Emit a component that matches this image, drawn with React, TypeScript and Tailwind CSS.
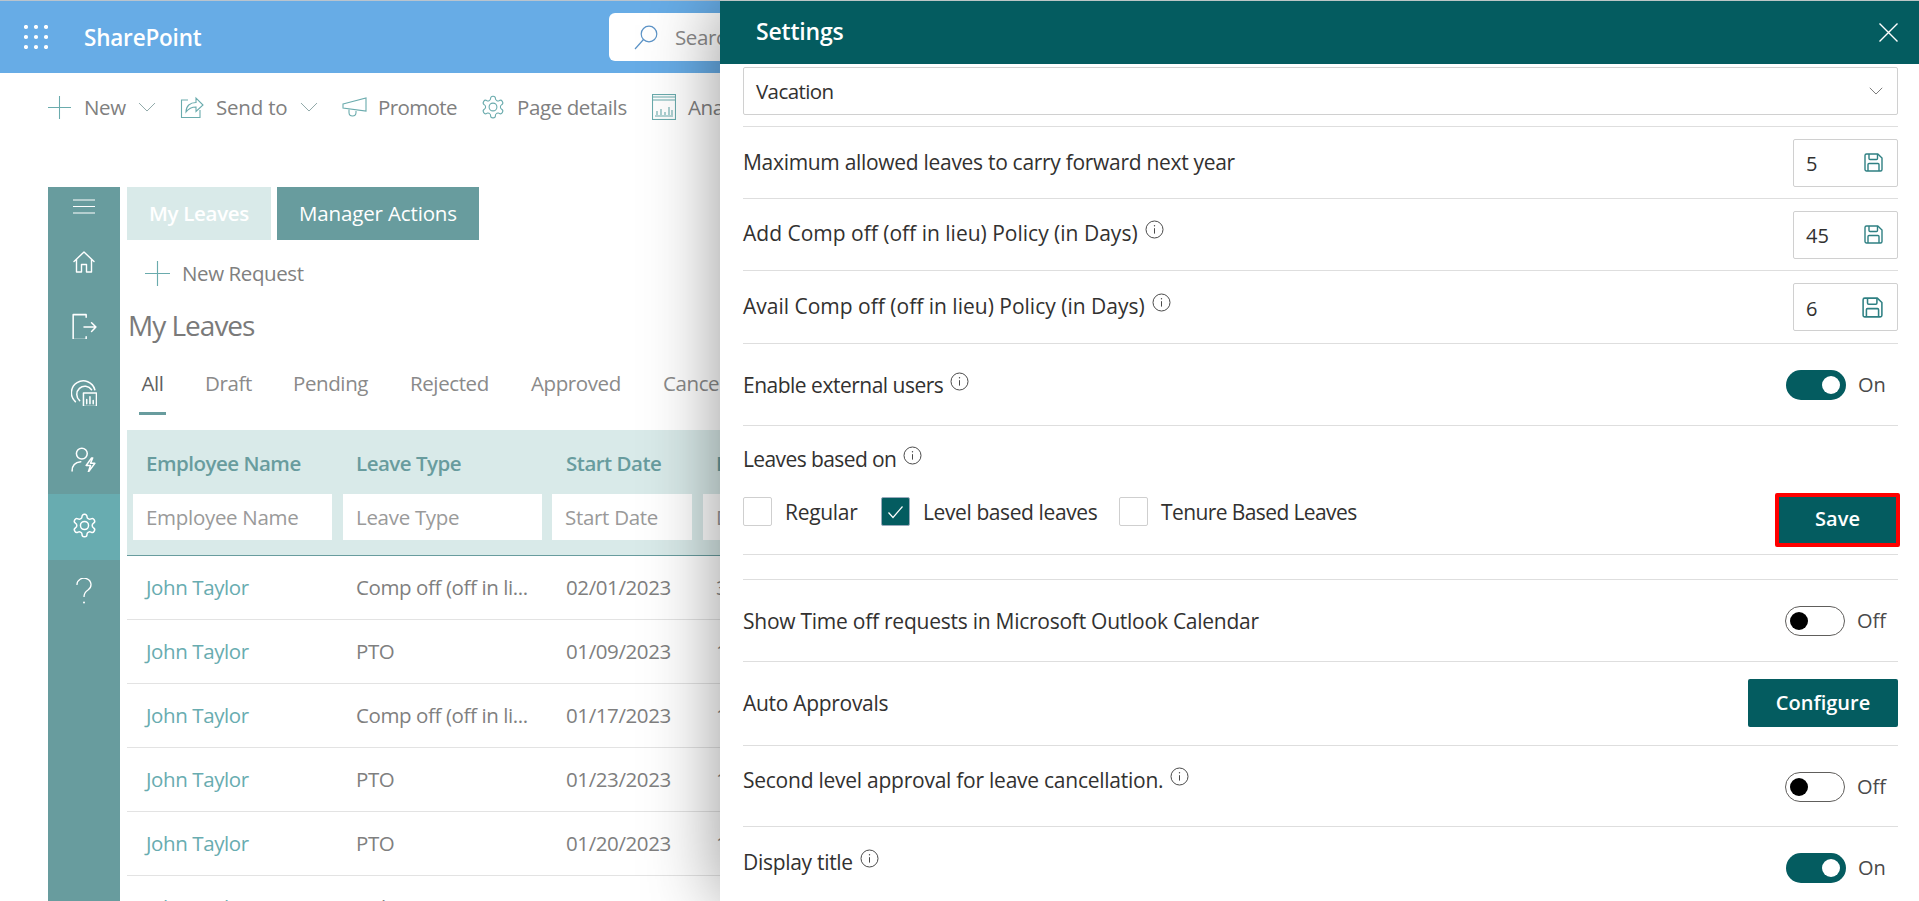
import React from "react";

const F = { fontFamily: '"Open Sans", "Noto Sans", sans-serif' };

function Info({ className = "" }: { className?: string }) {
  return (
    <svg width="19" height="19" viewBox="0 0 19 19" fill="none" stroke="#4a4a4a" strokeWidth="1" className={className}>
      <circle cx="9.5" cy="9.5" r="8.5" />
      <path d="M9.5 8.2v5.4" />
      <circle cx="9.5" cy="5.8" r="0.7" fill="#4a4a4a" stroke="none" />
    </svg>
  );
}

function Floppy({ big = false }: { big?: boolean }) {
  const s = big ? 21 : 19;
  return (
    <svg width={s} height={s} viewBox="0 0 19 19" fill="none" stroke="#2f8083" strokeWidth="1.4">
      <path d="M1 2.5A1.5 1.5 0 0 1 2.5 1h11.3L18 5v11.5a1.5 1.5 0 0 1-1.5 1.5h-14A1.5 1.5 0 0 1 1 16.5z" />
      <path d="M5 1v4.5a1 1 0 0 0 1 1h6.5a1 1 0 0 0 1-1V1" />
      <path d="M4 18v-6.5a1 1 0 0 1 1-1h9a1 1 0 0 1 1 1V18" />
    </svg>
  );
}

function Toggle({ on }: { on: boolean }) {
  return (
    <div className="flex items-center">
      {on ? (
        <div className="w-[60px] h-[30px] rounded-full bg-[#045c60] flex items-center justify-end pr-[6px]">
          <div className="w-[18px] h-[18px] rounded-full bg-white" />
        </div>
      ) : (
        <div className="w-[60px] h-[30px] rounded-full border border-[#605e5c] bg-white flex items-center pl-[4px]">
          <div className="w-[18px] h-[18px] rounded-full bg-black" />
        </div>
      )}
      <span className="ml-[12px] w-[40px] text-[20px] text-[#4a4a4a]">{on ? "On" : "Off"}</span>
    </div>
  );
}

function Row({ h, children, last = false }: { h: string; children: React.ReactNode; last?: boolean }) {
  return (
    <div className={`${h} flex items-center justify-between shrink-0 ${last ? "" : "border-b border-[#dedede]"}`}>{children}</div>
  );
}

function Label({ text, info = false, mb = "", track = "tracking-[-0.3px]" }: { text: string; info?: boolean; mb?: string; track?: string }) {
  return (
    <div className={`flex items-start ${mb}`}>
      <span className={`text-[21px] leading-[28px] ${track} text-[#323130] whitespace-nowrap`}>{text}</span>
      {info && <Info className="ml-[7px] mt-[1px]" />}
    </div>
  );
}

function NumBox({ v, big = false }: { v: string; big?: boolean }) {
  return (
    <div className="w-[105px] h-[48px] border border-[#d0d0d0] rounded-[2px] flex items-center justify-between pl-[12px] pr-[14px]">
      <span className="text-[20px] pt-[3px] text-[#323130]">{v}</span>
      <Floppy big={big} />
    </div>
  );
}

function Check({ on = false }: { on?: boolean }) {
  return on ? (
    <div className="w-[29px] h-[29px] rounded-[2px] bg-[#045c60] border border-[#9ab] flex items-center justify-center">
      <svg width="17" height="14" viewBox="0 0 17 14" fill="none" stroke="#fff" strokeWidth="1.2"><path d="M1.5 7.5l4.5 5L15.5 1.5" /></svg>
    </div>
  ) : (
    <div className="w-[29px] h-[29px] rounded-[2px] bg-white border border-[#cfcfcf]" />
  );
}

function SideItem({ active = false, h, children }: { active?: boolean; h: string; children: React.ReactNode }) {
  return <div className={`${h} flex items-center justify-center ${active ? "bg-[#68acb0]" : ""}`}>{children}</div>;
}

const Stroke = ({ s = 24, children }: { s?: number; children: React.ReactNode }) => (
  <svg width={s} height={s} viewBox="0 0 24 24" fill="none" stroke="#fff" strokeWidth="1.4" strokeLinejoin="round" strokeLinecap="round">{children}</svg>
);

const TealPlus = ({ s }: { s: number }) => (
  <svg width={s} height={s} viewBox="0 0 24 24" stroke="#6aabad" strokeWidth="1.1" fill="none"><path d="M12 0v24M0 12h24" /></svg>
);

const Chevron = ({ w = 18, c = "#8fa8a8" }: { w?: number; c?: string }) => (
  <svg width={w} height={w * 0.56} viewBox="0 0 18 10" fill="none" stroke={c} strokeWidth="1"><path d="M1 1l8 8 8-8" /></svg>
);

const Gear = ({ s, c, sw = 1.3 }: { s: number; c: string; sw?: number }) => (
  <svg width={s} height={s} viewBox="0 0 24 24" fill="none" stroke={c} strokeWidth={sw} strokeLinejoin="round">
    <path d="M12.22 2h-.44a2 2 0 0 0-2 2v.18a2 2 0 0 1-1 1.73l-.43.25a2 2 0 0 1-2 0l-.15-.08a2 2 0 0 0-2.73.73l-.22.38a2 2 0 0 0 .73 2.73l.15.1a2 2 0 0 1 1 1.72v.51a2 2 0 0 1-1 1.74l-.15.09a2 2 0 0 0-.73 2.73l.22.38a2 2 0 0 0 2.73.73l.15-.08a2 2 0 0 1 2 0l.43.25a2 2 0 0 1 1 1.73V20a2 2 0 0 0 2 2h.44a2 2 0 0 0 2-2v-.18a2 2 0 0 1 1-1.73l.43-.25a2 2 0 0 1 2 0l.15.08a2 2 0 0 0 2.73-.73l.22-.39a2 2 0 0 0-.73-2.73l-.15-.08a2 2 0 0 1-1-1.74v-.5a2 2 0 0 1 1-1.74l.15-.09a2 2 0 0 0 .73-2.73l-.22-.38a2 2 0 0 0-2.73-.73l-.15.08a2 2 0 0 1-2 0l-.43-.25a2 2 0 0 1-1-1.73V4a2 2 0 0 0-2-2z" />
    <circle cx="12" cy="12" r="3.6" />
  </svg>
);

const cols = ["w-[210px]", "w-[210px]", "w-[150px]", "w-[240px]"];
const inputs = ["w-[199px] ml-[6px]", "w-[199px] ml-[6px]", "w-[140px] ml-[5px]", "w-[199px] ml-[6px]"];
const heads = ["Employee Name", "Leave Type", "Start Date", "Days"];
const rows = [
  ["Comp off (off in li...", "02/01/2023", "3"],
  ["PTO", "01/09/2023", "1"],
  ["Comp off (off in li...", "01/17/2023", "1"],
  ["PTO", "01/23/2023", "1"],
  ["PTO", "01/20/2023", "1"],
  ["Sick", "01/10/2023", "1"],
];

export default function App() {
  return (
    <div className="relative w-[1919px] h-[901px] overflow-hidden bg-white" style={F}>
      {/* Page underneath */}
      <header className="h-[73px] bg-[#67ace6] border-t border-[#b9c4ce] flex items-center">
        <svg width="24" height="24" viewBox="0 0 24 24" fill="#fff" className="ml-[24px]">
          {[2, 12, 22].map((y) => [2, 12, 22].map((x) => <circle key={`${x}-${y}`} cx={x} cy={y} r="2.1" />))}
        </svg>
        <span className="ml-[36px] w-[118px] pt-[2px] text-[22.5px] font-semibold text-white tracking-[-0.2px]">SharePoint</span>
        <div className="ml-[407px] w-[300px] h-[48px] bg-white rounded-[6px] flex items-center pl-[25px]">
          <svg width="24" height="25" viewBox="0 0 24 25" fill="none" stroke="#5b93c7" strokeWidth="1.2"><circle cx="15" cy="9" r="7.8" /><path d="M9.5 14.5L1 24" /></svg>
          <span className="ml-[17px] text-[20.5px] tracking-[-0.4px] text-[#8a8a8a]">Search</span>
        </div>
      </header>

      <div className="h-[68px] pl-[48px] flex items-center text-[20.5px] tracking-[-0.4px] text-[#808080]">
        <TealPlus s={23} />
        <span className="ml-[13px] w-[42px]">New</span>
        <span className="ml-[12px]"><Chevron /></span>
        <svg width="24" height="24" viewBox="0 0 24 24" fill="none" stroke="#6aabad" strokeWidth="1.1" className="ml-[24px]">
          <path d="M8 5H1.5v17.5H20V15" /><path d="M6 17c0-6 4-9.500 10-9.500V3l7 7-7 6.500V12c-4 0-7 1-10 5z" />
        </svg>
        <span className="ml-[12px] w-[72px] whitespace-nowrap tracking-[-0.2px]">Send to</span>
        <span className="ml-[12px]"><Chevron /></span>
        <svg width="25" height="20" viewBox="0 0 25 20" fill="none" stroke="#6aabad" strokeWidth="1.1" className="ml-[24px]">
          <path d="M1 7l23-6v13L1 11z" /><path d="M7 12.500v3a3.500 3.500 0 0 0 7 0v-1.500" />
        </svg>
        <span className="ml-[11px] w-[78px] tracking-[-0.6px]">Promote</span>
        <span className="ml-[24px]"><Gear s={26} c="#6aabad" sw={1} /></span>
        <span className="ml-[11px] w-[111px] whitespace-nowrap">Page details</span>
        <svg width="24" height="26" viewBox="0 0 24 26" fill="none" stroke="#6aabad" strokeWidth="1.1" className="ml-[24px]">
          <rect x="0.500" y="0.500" width="23" height="25" /><path d="M0.500 6h23M0.500 3h23" />
          <path d="M5 21v-4M9 21v-6M13 21v-3M17 21v-8M20 21v-5M3 22h18" />
        </svg>
        <span className="ml-[12px]">Analytics</span>
      </div>

      <div className="mt-[46px] ml-[48px] flex h-[714px]">
        <aside className="w-[72px] bg-[#689c9e] flex flex-col shrink-0">
          <SideItem h="h-[42px]">
            <svg width="22" height="15" viewBox="0 0 22 15" stroke="#fff" strokeWidth="1.1" className="mb-[4px]"><path d="M0 1h22M0 7.500h22M0 14h22" /></svg>
          </SideItem>
          <SideItem h="h-[66px]">
            <Stroke s={24}><path d="M2 11.500L12 2l10 9.500M4.500 9.500V22h5v-7.500h5V22h5V9.500" /></Stroke>
          </SideItem>
          <SideItem h="h-[63px]">
            <div className="mb-[2px]"><Stroke s={26}><path d="M14 4V1.500H2v23h12V22M2 1.500l0 23M12 13h11M19 9l4 4-4 4" /></Stroke></div>
          </SideItem>
          <SideItem h="h-[69px]">
            <Stroke s={26}><path d="M4 20A11 11 0 1 1 22 9" /><path d="M8 19A7.500 7.500 0 1 1 19 9" /><rect x="11.500" y="12" width="12" height="12.500" fill="#689c9e" /><path d="M14.500 22v-4M17.500 22v-6.500M20.500 22v-3" /></Stroke>
          </SideItem>
          <SideItem h="h-[67px]">
            <div className="mb-[4px]"><Stroke s={26}><circle cx="10" cy="7" r="5" /><path d="M1 23c0-5 3-8 8-8.500" /><path d="M19 11l-5 7h4l-2 6 6-8h-4l2-5z" /></Stroke></div>
          </SideItem>
          <SideItem active h="h-[66px]">
            <div className="mb-[4px]"><Gear s={27} c="#fff" /></div>
          </SideItem>
          <SideItem h="h-[62px]">
            <svg width="16" height="26" viewBox="0 0 16 26" fill="none" stroke="#fff" strokeWidth="1.3"><path d="M1 7a7 6.500 0 1 1 11 5c-3 2-4 3.500-4 7" /><circle cx="8" cy="24.500" r="1" fill="#fff" stroke="none" /></svg>
          </SideItem>
        </aside>

        <main className="ml-[7px] w-[900px] flex flex-col">
          <div className="flex h-[53px] shrink-0 text-[20.5px] text-white">
            <div className="w-[144px] bg-[#d9eae9] flex items-center justify-center font-semibold tracking-[-0.3px]">My Leaves</div>
            <div className="ml-[6px] w-[202px] bg-[#689c9e] flex items-center justify-center tracking-[-0.15px]">Manager Actions</div>
          </div>
          <div className="h-[68px] pb-[2px] shrink-0 pl-[18px] flex items-center text-[20.5px] text-[#808080]">
            <TealPlus s={25} />
            <span className="ml-[12px] tracking-[-0.4px]">New Request</span>
          </div>
          <h1 className="h-[34px] shrink-0 pl-[1px] flex items-center text-[28px] font-medium text-[#7a7a7a] tracking-[-1px]">My Leaves</h1>
          <nav className="mt-[29px] h-[44px] shrink-0 flex text-[20.5px] text-[#8a8a8a] tracking-[-0.4px] leading-[24px] whitespace-nowrap">
            <div className="ml-[12px] w-[27px] h-full border-b-[3px] border-[#689c9e] text-center text-[#5f5f5f]">All</div>
            <div className="ml-[39px] w-[46px]">Draft</div>
            <div className="ml-[42px] w-[74px]">Pending</div>
            <div className="ml-[43px] w-[78px]">Rejected</div>
            <div className="ml-[43px] w-[90px]">Approved</div>
            <div className="ml-[42px]">Cancelled</div>
          </nav>

          <div className="mt-[15px] h-[126px] shrink-0 bg-[#d9eae9] border-b border-[#689c9e] flex">
            {heads.map((h, i) => (
              <div key={h} className={`${cols[i]} shrink-0`}>
                <div className="h-[64px] pl-[19px] pt-[2px] flex items-center text-[20.5px] font-semibold text-[#689c9e] tracking-[-0.5px]">{h}</div>
                <div className={`${inputs[i]} h-[46px] bg-white pl-[13px] flex items-center text-[20.5px] text-[#9a9a9a] tracking-[-0.3px]`}>{h}</div>
              </div>
            ))}
          </div>
          {rows.map((r, idx) => (
            <div key={idx} className="h-[64px] shrink-0 border-b border-[#e3e3e3] flex items-center text-[20.5px] text-[#7f7f7f] tracking-[-0.4px]">
              <div className={`${cols[0]} shrink-0 pl-[19px] text-[#68acb0]`}>John Taylor</div>
              <div className={`${cols[1]} shrink-0 pl-[19px] whitespace-nowrap`}>{r[0]}</div>
              <div className={`${cols[2]} shrink-0 pl-[19px]`}>{r[1]}</div>
              <div className={`${cols[3]} shrink-0 pl-[19px]`}>{r[2]}</div>
            </div>
          ))}
        </main>
      </div>

      {/* Settings panel overlay */}
      <section className="absolute left-[720px] top-0 right-0 bottom-0 bg-white shadow-[0_0_70px_rgba(0,0,0,0.42)] flex flex-col">
        <div className="h-[64px] shrink-0 bg-[#045c60] border-t border-[#bcc6c6] flex items-center justify-between pl-[36px] pr-[21px]">
          <span className="pb-[2px] text-[23px] font-semibold text-white tracking-[-0.2px]">Settings</span>
          <svg width="19" height="19" viewBox="0 0 19 19" stroke="#fff" strokeWidth="1.4"><path d="M0.500 0.500l18 18M18.500 0.500l-18 18" /></svg>
        </div>
        <div className="pl-[23px] pr-[21px] flex flex-col">
          <Row h="h-[63px] items-start">
            <div className="mt-[3px] w-full h-[48px] border border-[#d0d0d0] rounded-[2px] flex items-center justify-between pl-[12px] pr-[14px]">
              <span className="text-[20.5px] tracking-[-0.6px] text-[#323130]">Vacation</span>
              <Chevron w={14} c="#555" />
            </div>
          </Row>
          <Row h="h-[72px]"><Label text="Maximum allowed leaves to carry forward next year" mb="mb-[2px]" /><NumBox v="5" /></Row>
          <Row h="h-[72px]"><Label text="Add Comp off (off in lieu) Policy (in Days)" mb="mb-[4px]" track="tracking-[0px]" info /><NumBox v="45" /></Row>
          <Row h="h-[73px]"><Label text="Avail Comp off (off in lieu) Policy (in Days)" mb="mb-[2px]" track="tracking-[0px]" info /><NumBox v="6" big /></Row>
          <Row h="h-[82px]"><Label text="Enable external users" track="tracking-[-0.5px]" info /><Toggle on /></Row>
          <div className="h-[129px] shrink-0 border-b border-[#dedede] flex flex-col relative">
            <div className="mt-[19px]"><Label text="Leaves based on" track="tracking-[-0.6px]" info /></div>
            <div className="mt-[22px] flex items-center text-[21px] tracking-[-0.3px] text-[#323130] whitespace-nowrap">
              <Check /><span className="ml-[13px] w-[72px] mt-[2px]">Regular</span>
              <span className="ml-[24px]"><Check on /></span><span className="ml-[13px] w-[173px] mt-[2px] tracking-[-0.4px]">Level based leaves</span>
              <span className="ml-[23px]"><Check /></span><span className="ml-[13px] mt-[2px] tracking-[-0.6px]">Tenure Based Leaves</span>
            </div>
            <button className="absolute right-[-2px] top-[67px] w-[125px] h-[54px] pb-[2px] bg-[#045c60] border-[4px] border-[#ff0000] rounded-[2px] text-white text-[20px] font-semibold">Save</button>
          </div>
          <Row h="h-[25px]"><span /></Row>
          <Row h="h-[82px]"><Label text="Show Time off requests in Microsoft Outlook Calendar" track="tracking-[-0.25px]" /><div className="mr-[1px]"><Toggle on={false} /></div></Row>
          <Row h="h-[84px]"><Label text="Auto Approvals" mb="mb-[2px]" /><button className="w-[150px] h-[48px] mb-[2px] bg-[#045c60] rounded-[2px] text-white text-[20px] font-semibold">Configure</button></Row>
          <Row h="h-[81px]"><Label text="Second level approval for leave cancellation." track="tracking-[-0.25px]" info mb="mb-[12px]" /><div className="mr-[1px] mt-[2px]"><Toggle on={false} /></div></Row>
          <Row h="h-[75px]" last><Label text="Display title" info mb="mb-[5px]" /><div className="mt-[7px]"><Toggle on /></div></Row>
        </div>
      </section>
    </div>
  );
}
